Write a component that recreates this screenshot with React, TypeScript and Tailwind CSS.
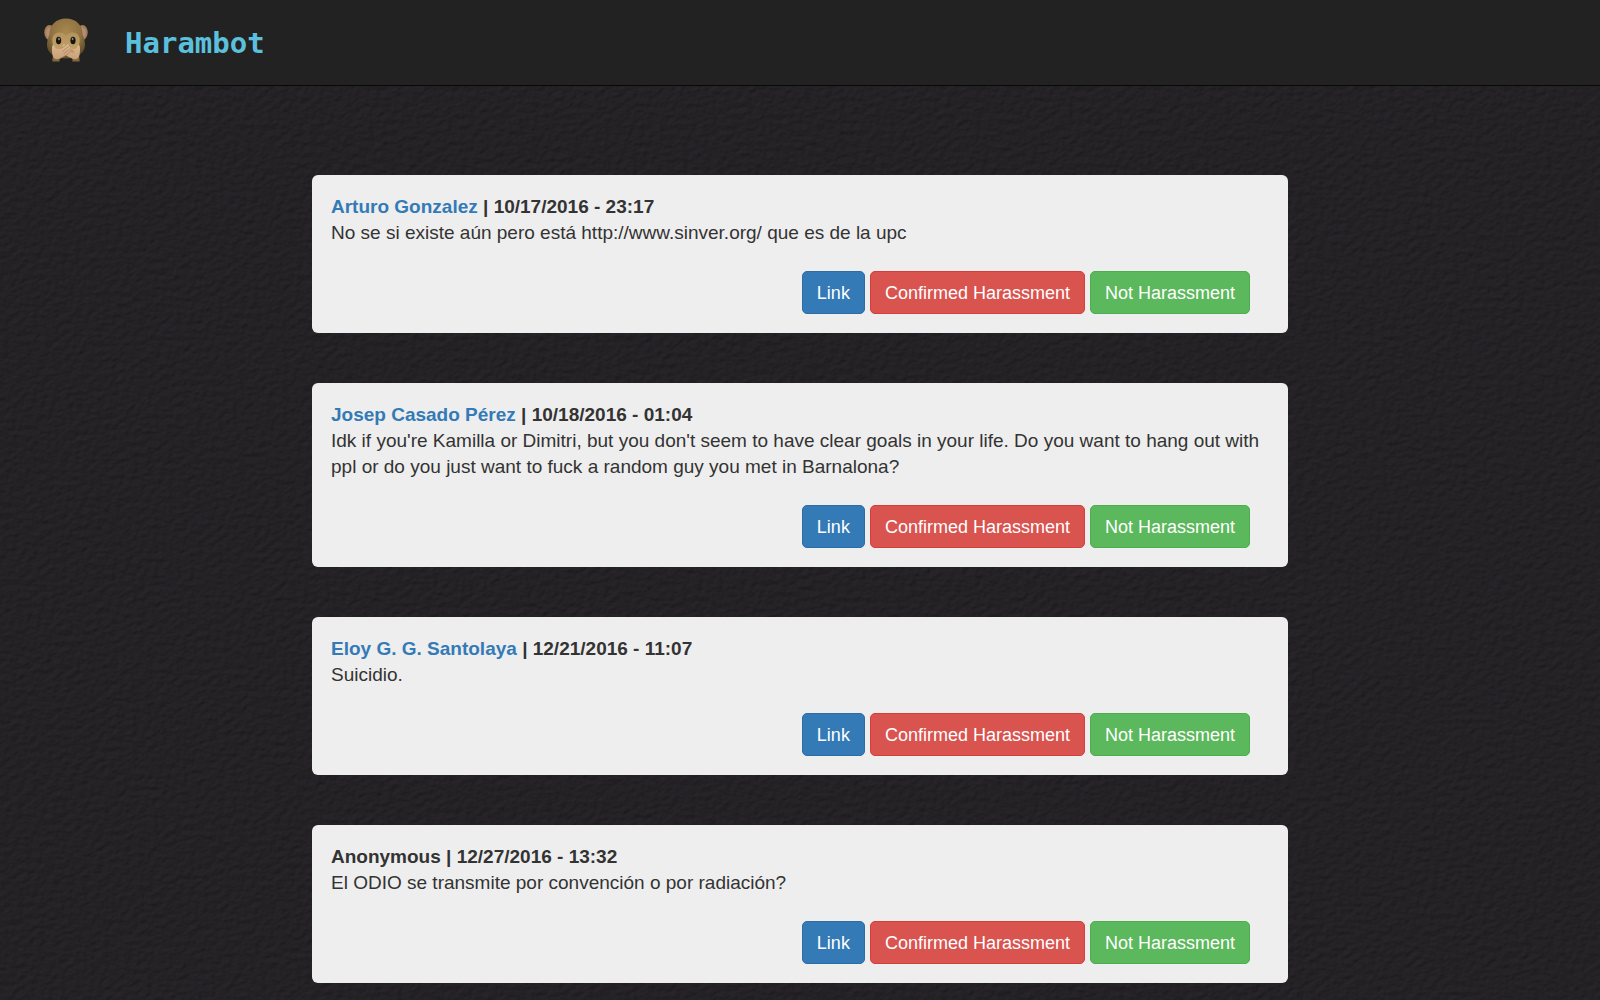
const reports = [
  {
    author: 'Arturo Gonzalez',
    hasProfile: true,
    date: '10/17/2016 - 23:17',
    message: 'No se si existe aún pero está http://www.sinver.org/ que es de la upc',
  },
  {
    author: 'Josep Casado Pérez',
    hasProfile: true,
    date: '10/18/2016 - 01:04',
    message:
      "Idk if you're Kamilla or Dimitri, but you don't seem to have clear goals in your life. Do you want to hang out with ppl or do you just want to fuck a random guy you met in Barnalona?",
  },
  {
    author: 'Eloy G. G. Santolaya',
    hasProfile: true,
    date: '12/21/2016 - 11:07',
    message: 'Suicidio.',
  },
  {
    author: 'Anonymous',
    hasProfile: false,
    date: '12/27/2016 - 13:32',
    message: 'El ODIO se transmite por convención o por radiación?',
  },
];

type Report = (typeof reports)[number];

function MonkeyLogo() {
  return (
    <svg viewBox="0 0 44 44" className="w-11 h-11" aria-hidden="true">
      <defs>
        <radialGradient id="fur" cx="50%" cy="35%" r="65%">
          <stop offset="0" stopColor="#a98850" />
          <stop offset="0.6" stopColor="#8f7341" />
          <stop offset="1" stopColor="#5f4c2a" />
        </radialGradient>
        <linearGradient id="skin" x1="0" y1="0" x2="0" y2="1">
          <stop offset="0" stopColor="#b3945c" />
          <stop offset="1" stopColor="#c4a268" />
        </linearGradient>
        <linearGradient id="hand" x1="0" y1="0" x2="0" y2="1">
          <stop offset="0" stopColor="#dfb990" />
          <stop offset="1" stopColor="#c89f78" />
        </linearGradient>
      </defs>
      {/* Ears */}
      <ellipse cx="5.5" cy="14.5" rx="5.2" ry="7.5" fill="#a08054" />
      <ellipse cx="38.5" cy="14.5" rx="5.2" ry="7.5" fill="#a08054" />
      <ellipse cx="5.8" cy="15" rx="3.6" ry="5.6" fill="#b98b78" />
      <ellipse cx="38.2" cy="15" rx="3.6" ry="5.6" fill="#b98b78" />
      {/* Head */}
      <path d="M22 0.500C12 0.500 5.500 7 5.500 16C4 20 3 23 3 27C3 35 11 40.500 22 40.500C33 40.500 41 35 41 27C41 23 40 20 38.500 16C38.500 7 32 0.500 22 0.500Z" fill="url(#fur)" />
      {/* Face */}
      <path d="M22 17.500C19 13 10 13.500 8.500 20C7.700 25 9.500 28 10.500 30L14 34H30L33.500 30C34.500 28 36.300 25 35.500 20C34 13.500 25 13 22 17.500Z" fill="url(#skin)" />
      <ellipse cx="14.600" cy="22.500" rx="2.600" ry="3.800" fill="#161412" />
      <ellipse cx="29" cy="22.500" rx="2.600" ry="3.800" fill="#161412" />
      <ellipse cx="15" cy="21" rx="0.900" ry="1.300" fill="#8f8a80" />
      <ellipse cx="28.600" cy="21" rx="0.900" ry="1.300" fill="#8f8a80" />
      {/* Arms */}
      <path d="M9.500 37C8.500 39 8.200 41.500 8.500 43.500H15.500L16 37ZM28 37L28.500 43.500H35.500C35.800 41.500 35.500 39 34.500 37Z" fill="#84683a" />
      {/* Hands */}
      <path d="M35 27C36.300 27.500 36.200 33 35.500 37C35 41 31 42 28 40.500C23.500 38.500 19.500 36 17.500 33C16.500 31.500 17.800 30.500 19 31.500C17.500 29.800 17.300 28 19 28.200C18.800 26 20.600 25.800 21.600 27L27 30.500C29 31.500 31 31.500 32.500 30C33.300 29 33.600 26.800 35 27Z" fill="url(#hand)" />
      <path d="M9 27C7.700 27.500 7.800 33 8.500 37C9 41 13 42 16 40.500C20.500 38.500 24.500 36 26.500 33C27.500 31.500 26.200 30.500 25 31.500C26.500 29.800 26.700 28 25 28.200C25.200 26 23.400 25.800 22.400 27L17 30.500C15 31.500 13 31.500 11.500 30C10.700 29 10.400 26.800 9 27Z" fill="url(#hand)" />
      <path d="M25 28.200L18.500 33.500M25 31.500L20 35.500M26.500 33C24.500 36 20.500 38.500 16 40.500M22.400 27L17 30.500M26.500 33L29 34.500M26 31L30 33.500" stroke="#9a7350" strokeWidth="0.600" strokeLinecap="round" fill="none" />
    </svg>
  );
}

// Embossed dark leather, lit from the top left
function LeatherTexture() {
  return (
    <svg className="absolute inset-0 w-full h-full" aria-hidden="true">
      <filter id="leather" x="0" y="0" width="100%" height="100%" colorInterpolationFilters="sRGB">
        <feTurbulence type="fractalNoise" baseFrequency="0.14 0.18" numOctaves="2" seed="7" result="noise" />
        <feDiffuseLighting in="noise" surfaceScale="0.9" diffuseConstant="1" lightingColor="#29272b">
          <feDistantLight azimuth="235" elevation="60" />
        </feDiffuseLighting>
      </filter>
      <rect width="100%" height="100%" filter="url(#leather)" />
    </svg>
  );
}

function ReportCard({ report }: { report: Report }) {
  const button = 'h-[43px] px-[14px] rounded-[5px] border text-white text-lg cursor-pointer';

  return (
    <article className="bg-[#eee] rounded-md p-[19px] text-[19px] leading-[26px] text-[#333]">
      <h2 className="font-bold">
        {report.hasProfile ? (
          <a href="#" className="text-[#337ab7]">{report.author}</a>
        ) : (
          report.author
        )}{' '}
        | {report.date}
      </h2>
      <p>{report.message}</p>
      <div className="flex justify-end gap-[5px] mt-[25px] pr-[19px]">
        <a href="#" className={`${button} flex items-center bg-[#337ab7] border-[#2e6da4]`}>Link</a>
        <button type="button" className={`${button} bg-[#d9534f] border-[#d43f3a]`}>Confirmed Harassment</button>
        <button type="button" className={`${button} bg-[#5cb85c] border-[#4cae4c]`}>Not Harassment</button>
      </div>
    </article>
  );
}

export default function App() {
  return (
    <div className="relative min-h-screen bg-[#222124] font-['Liberation_Sans',Arial,sans-serif]">
      <LeatherTexture />
      <div className="relative">
        {/* Navbar */}
        <header className="h-[86px] bg-[#222] border-b border-[#080808] px-11 pt-[18px]">
          <a href="#" className="inline-flex items-start gap-[37px]">
            <MonkeyLogo />
            <span className="text-[29px] leading-[50px] font-bold text-[#5bc0de] font-['DejaVu_Sans_Mono',monospace]">Harambot</span>
          </a>
        </header>

        {/* Reports */}
        <main className="w-[61%] mx-auto pt-[89px] pb-4 space-y-[50px]">
          {reports.map((report) => (
            <ReportCard key={report.date} report={report} />
          ))}
        </main>
      </div>
    </div>
  );
}
